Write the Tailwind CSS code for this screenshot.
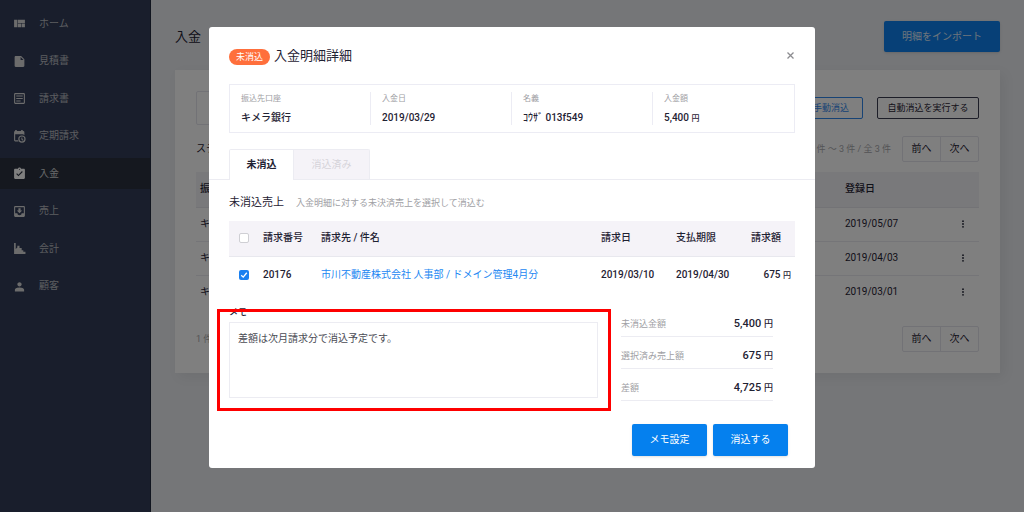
<!DOCTYPE html>
<html lang="ja">
<head>
<meta charset="utf-8">
<meta name="viewport" content="width=device-width, initial-scale=1">
<title>入金明細詳細</title>
<script src="https://cdn.jsdelivr.net/npm/@tailwindcss/browser@4"></script>
</head>
<body class="h-screen overflow-hidden bg-[#eaecf0] font-['Roboto','Noto_Sans_CJK_JP',sans-serif] text-[10px] leading-4 text-[#1f2233]">
<div class="flex min-h-screen">
  <nav aria-label="メイン" class="w-[151px] shrink-0 border-r border-[#222a3e] bg-[#323d58] pt-2">
    <ul class="flex h-[294px] flex-col justify-between text-[#b8bac0]">
      <li><a href="#" class="flex h-[31px] items-center gap-[13px] pl-[13px]"><svg class="size-[13px] text-[#d8d8d8]" viewBox="0 0 24 24" fill="currentColor"><path d="M9 19h6v-7H9v7zm-7 0h6V5H2v14zm14 0h6v-7h-6v7zM9 5v6h13V5H9z"/></svg>ホーム</a></li>
      <li><a href="#" class="flex h-[31px] items-center gap-[13px] pl-[13px]"><svg class="size-[13px] text-[#d8d8d8]" viewBox="0 0 24 24" fill="currentColor"><path d="M5 2c-1.100 0-2 .9-2 2v16c0 1.100.9 2 2 2h14c1.100 0 2-.9 2-2V8l-6-6H5zm9 7V3.500L19.500 9H14z"/></svg>見積書</a></li>
      <li><a href="#" class="flex h-[31px] items-center gap-[13px] pl-[13px]"><svg class="size-[13px] text-[#d8d8d8]" viewBox="0 0 24 24" fill="currentColor"><path d="M20 2H4a2 2 0 0 0-2 2v16a2 2 0 0 0 2 2h16a2 2 0 0 0 2-2V4a2 2 0 0 0-2-2zm0 18H4V4h16v16zM6 6.500h12v2H6zM6 11h12v2H6zM6 15.500h8v2H6z"/></svg>請求書</a></li>
      <li><a href="#" class="flex h-[31px] items-center gap-[13px] pl-[13px]"><svg class="size-[13px] text-[#d8d8d8]" viewBox="0 0 24 24" fill="currentColor"><path d="M4 0h3v2h8V0h3v2h1a2 2 0 0 1 2 2v5.500a7 7 0 0 0-2-1V8H4v11h5.300a7 7 0 0 0 1 2H4a2 2 0 0 1-2-2V4a2 2 0 0 1 2-2z"/><path fill-rule="evenodd" d="M16.500 10a6.800 6.800 0 1 0 0 13.600 6.800 6.800 0 0 0 0-13.600zm0 2.200a4.600 4.600 0 1 1 0 9.200 4.600 4.600 0 0 1 0-9.200zm-1 1.600v3.700l2.800 2.200 1.200-1.400-2.200-1.700v-2.800z"/></svg>定期請求</a></li>
      <li><a href="#" aria-current="page" class="flex h-[31px] items-center gap-[13px] bg-[#2b303e] pl-[13px] text-[#d2d2d4]"><svg class="size-[13px] text-white" viewBox="0 0 24 24" fill="currentColor"><path d="M20 3h-5.180C14.400 1.840 13.300 1 12 1s-2.400.84-2.820 2H4c-1.100 0-2 .9-2 2v15c0 1.100.9 2 2 2h16c1.100 0 2-.9 2-2V5c0-1.100-.9-2-2-2zm-8 0c.55 0 1 .45 1 1s-.45 1-1 1-1-.45-1-1 .45-1 1-1zm-2 14-4-4 1.410-1.410L10 14.170l6.590-6.590L18 9l-8 8z"/></svg>入金</a></li>
      <li><a href="#" class="flex h-[31px] items-center gap-[13px] pl-[13px]"><svg class="size-[13px] text-[#d8d8d8]" viewBox="0 0 24 24" fill="currentColor"><path fill-rule="evenodd" d="M4 2h16a2 2 0 0 1 2 2v16a2 2 0 0 1-2 2H4a2 2 0 0 1-2-2V4a2 2 0 0 1 2-2zm0 2v11h4a4 4 0 0 0 8 0h4V4z"/><path d="M10 6h4v4h3l-5 5-5-5h3z"/></svg>売上</a></li>
      <li><a href="#" class="flex h-[31px] items-center gap-[13px] pl-[13px]"><svg class="size-[13px] text-[#d8d8d8]" viewBox="0 0 24 24" fill="currentColor"><path d="M2 2h3v11l3-3V7h4v4h4v4h3v3h4v4H2z"/></svg>会計</a></li>
      <li><a href="#" class="flex h-[31px] items-center gap-[13px] pl-[13px]"><svg class="size-[13px] text-[#d8d8d8]" viewBox="0 0 24 24" fill="currentColor"><path d="M12 12c2.210 0 4-1.790 4-4s-1.790-4-4-4-4 1.790-4 4 1.790 4 4 4zm0 2c-2.670 0-8.500 1.340-8.500 4v3h17v-3c0-2.660-5.830-4-8.500-4z"/></svg>顧客</a></li>
    </ul>
  </nav>
  <main class="min-w-0 flex-1 px-6 pt-[21px]">
    <div class="flex h-[31px] items-center justify-between">
      <h1 class="text-[13px]">入金</h1>
      <button class="h-full w-[116px] rounded-xs bg-[#0f81ee] text-[#dce8f8] shadow-sm">明細をインポート</button>
    </div>
    <section class="mt-[18px] bg-white px-[21px] py-[21px] shadow-[4px_4px_12px_rgba(0,0,0,0.06)]">
      <div class="flex h-[34px] items-center justify-end">
        <input type="search" aria-label="検索" class="mr-auto h-full w-60 rounded-xs border border-[#e4e4ec]">
        <button class="mr-[14px] h-[22px] w-16 rounded-xs border border-[#2f86ea] text-[9px] text-[#2f86ea]">手動消込</button>
        <button class="h-[22px] w-[102px] rounded-xs border border-[#3a3c50] text-[9px]">自動消込を実行する</button>
      </div>
      <div class="mt-[11px] flex h-[26px] items-center">
        <span>ステータス</span>
        <span class="mr-[11px] ml-auto text-[9px] text-[#a8a8ac]">1 件 〜 3 件 / 全 3 件</span>
        <div class="flex h-full w-[77px] divide-x divide-[#e4e4ec] rounded-xs border border-[#e4e4ec]"><button class="flex-1">前へ</button><button class="flex-1">次へ</button></div>
      </div>
      <table class="mt-[10px] w-full table-fixed text-left">
        <thead><tr class="h-[35px] border-b border-[#e6e6ec] bg-[#f3f3f7]"><th class="pl-1 font-medium">振込先口座</th><th class="w-[104px] font-medium">登録日</th><th aria-label="操作" class="w-[30px]"></th></tr></thead>
        <tbody>
          <tr class="h-[34px] border-b border-[#eaeaf0]"><td class="pl-1">キメラ銀行</td><td>2019/05/07</td><td><button aria-label="メニュー" class="block px-3"><svg class="h-2 w-1" viewBox="0 0 4 8" fill="currentColor"><circle cx="2" cy="1.200" r=".9"/><circle cx="2" cy="4" r=".9"/><circle cx="2" cy="6.800" r=".9"/></svg></button></td></tr>
          <tr class="h-[34px] border-b border-[#eaeaf0]"><td class="pl-1">キメラ銀行</td><td>2019/04/03</td><td><button aria-label="メニュー" class="block px-3"><svg class="h-2 w-1" viewBox="0 0 4 8" fill="currentColor"><circle cx="2" cy="1.200" r=".9"/><circle cx="2" cy="4" r=".9"/><circle cx="2" cy="6.800" r=".9"/></svg></button></td></tr>
          <tr class="h-[34px]"><td class="pl-1">キメラ銀行</td><td>2019/03/01</td><td><button aria-label="メニュー" class="block px-3"><svg class="h-2 w-1" viewBox="0 0 4 8" fill="currentColor"><circle cx="2" cy="1.200" r=".9"/><circle cx="2" cy="4" r=".9"/><circle cx="2" cy="6.800" r=".9"/></svg></button></td></tr>
        </tbody>
      </table>
      <div class="mt-[17px] flex h-[26px] items-center justify-between">
        <span class="text-[9px] text-[#a8a8ac]">1 件 〜 3 件 / 全 3 件</span>
        <div class="flex h-full w-[77px] divide-x divide-[#e4e4ec] rounded-xs border border-[#e4e4ec]"><button class="flex-1">前へ</button><button class="flex-1">次へ</button></div>
      </div>
    </section>
  </main>
</div>

<div class="fixed inset-0 flex items-start justify-center bg-black/50 pt-[27px]">
  <div role="dialog" aria-modal="true" aria-labelledby="dialog-title" class="w-full max-w-[606px] rounded-[3px] bg-white pb-3">
    <header class="flex items-center px-5 pt-[19px]">
      <span class="mt-[3px] rounded-full bg-[#ff6f3c] px-[7px] text-[9px] text-white">未消込</span>
      <h2 id="dialog-title" class="ml-1 text-[13px] leading-[18px]">入金明細詳細</h2>
      <button aria-label="閉じる" class="ml-auto"><svg class="size-[9px] text-[#8c8c90]" viewBox="0 0 9 9" fill="none" stroke="currentColor" stroke-width="1.300"><path d="M1.500 1.500l6 6M7.500 1.500l-6 6"/></svg></button>
    </header>
    <dl class="mx-5 mt-[19px] grid grid-cols-4 divide-x divide-[#ececf4] border border-[#ececf4] py-[7px] text-[8px]">
      <div class="h-[33px] pt-px pl-[11px]"><dt class="leading-3 text-[#a0a0a4]">振込先口座</dt><dd class="mt-[5px] text-[10px] font-medium">キメラ銀行</dd></div>
      <div class="h-[33px] pt-px pl-[11px]"><dt class="leading-3 text-[#a0a0a4]">入金日</dt><dd class="mt-[5px] text-[10px] font-medium">2019/03/29</dd></div>
      <div class="h-[33px] pt-px pl-[11px]"><dt class="leading-3 text-[#a0a0a4]">名義</dt><dd class="mt-[5px] text-[10px] font-medium">ｺｳｻﾞ 013f549</dd></div>
      <div class="h-[33px] pt-px pl-[11px]"><dt class="leading-3 text-[#a0a0a4]">入金額</dt><dd class="mt-[5px] text-[10px] font-medium">5,400 <span class="text-[8px]">円</span></dd></div>
    </dl>
    <div role="tablist" class="mt-4 flex border-b border-[#ececf2] px-5">
      <button role="tab" aria-selected="true" class="-mb-px h-[31px] w-[65px] rounded-tl-xs border border-b-0 border-[#ececf2] bg-white font-bold">未消込</button>
      <button role="tab" aria-selected="false" class="h-[30px] w-[76px] rounded-tr-xs border border-b-0 border-l-0 border-[#ececf2] bg-[#f5f3f8] text-[#d5d4da]">消込済み</button>
    </div>
    <div class="px-5">
      <div class="flex items-center gap-3 pt-[15px]">
        <h3 class="text-[11px]">未消込売上</h3>
        <p class="text-[9px] text-[#a0a0a4]">入金明細に対する未決済売上を選択して消込む</p>
      </div>
      <table class="mt-[10px] w-full table-fixed text-left font-medium">
        <thead><tr class="h-[35px] border-b border-[#e8e8ee] bg-[#f5f3f8]">
          <th class="w-[34px] pl-[10px]"><input type="checkbox" aria-label="すべて選択" class="block size-[10px] appearance-none rounded-xs border border-[#cfcfd4] bg-white"></th>
          <th class="w-[58px] font-medium">請求番号</th><th class="font-medium">請求先 / 件名</th><th class="w-[75px] font-medium">請求日</th><th class="w-[75px] font-medium">支払期限</th><th class="w-[44px] font-medium">請求額</th></tr></thead>
        <tbody><tr class="h-[38px]">
          <td class="pl-[10px]"><span class="relative block size-[10px]"><input type="checkbox" checked aria-label="20176 を選択" class="block size-[10px] appearance-none rounded-xs bg-[#1a80f0]"><svg class="pointer-events-none absolute inset-0 size-[10px]" viewBox="0 0 9 9" fill="none" stroke="white" stroke-width="1.200"><path d="M2 4.700l1.800 1.700L7 2.500"/></svg></span></td>
          <td>20176</td><td><a href="#" class="font-normal text-[#2287f2]">市川不動産株式会社 人事部 / ドメイン管理4月分</a></td><td>2019/03/10</td><td>2019/04/30</td><td class="pr-1 text-right whitespace-nowrap">675 <span class="text-[8px]">円</span></td></tr></tbody>
      </table>
      <div class="mt-[10px] flex items-start">
        <div class="relative w-[369px]">
          <label for="memo" class="block text-[9px] font-medium">メモ</label>
          <textarea id="memo" class="mt-[2px] block h-[76px] w-full resize-none border border-[#ececf2] px-2 py-[8px] text-[#4a4b54]">差額は次月請求分で消込予定です。</textarea>
          <div class="pointer-events-none absolute -right-[13px] -bottom-[13px] -left-3 top-[5px] border-[3px] border-[#fe0000]"></div>
        </div>
        <dl class="mt-px ml-[23px] w-[152px] text-[9px]">
          <div class="flex h-8 items-center justify-between border-b border-[#ececf2] pt-[6px]"><dt class="text-[#a0a0a4]">未消込金額</dt><dd class="text-[11px] font-medium">5,400 <span class="text-[9px]">円</span></dd></div>
          <div class="flex h-8 items-center justify-between border-b border-[#ececf2] pt-[6px]"><dt class="text-[#a0a0a4]">選択済み売上額</dt><dd class="text-[11px] font-medium">675 <span class="text-[9px]">円</span></dd></div>
          <div class="flex h-8 items-center justify-between border-b border-[#ececf2] pt-[6px]"><dt class="text-[#a0a0a4]">差額</dt><dd class="text-[11px] font-medium">4,725 <span class="text-[9px]">円</span></dd></div>
        </dl>
      </div>
      <div class="mt-[23px] flex justify-end gap-[6px] pr-[7px] text-white">
        <button class="h-8 w-[75px] rounded-xs bg-[#0580ee] shadow-sm">メモ設定</button>
        <button class="h-8 w-[75px] rounded-xs bg-[#0580ee] shadow-sm">消込する</button>
      </div>
    </div>
  </div>
</div>
</body>
</html>
